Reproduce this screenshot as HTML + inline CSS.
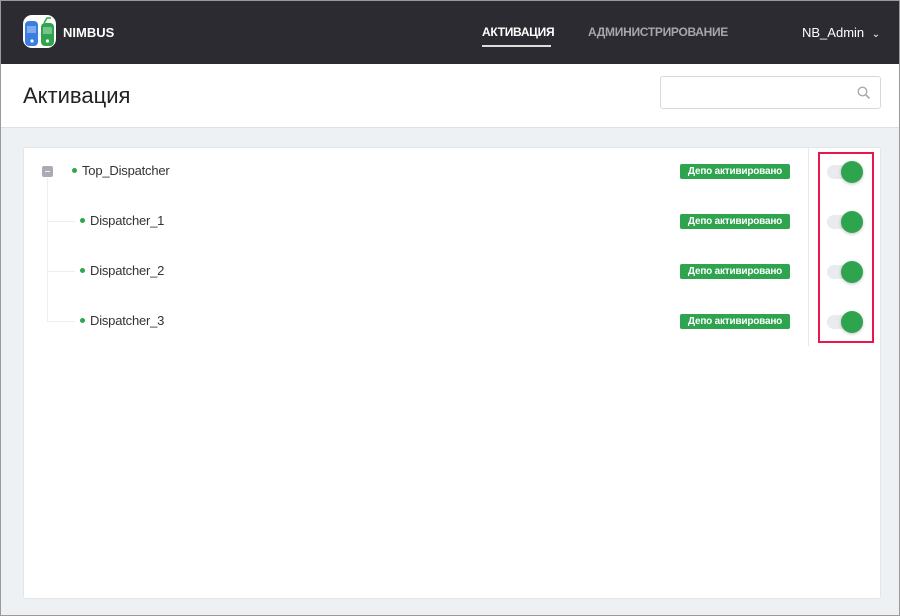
<!DOCTYPE html>
<html><head><meta charset="utf-8"><style>
*{margin:0;padding:0;box-sizing:border-box}
body{width:900px;height:616px;overflow:hidden;font-family:"Liberation Sans",sans-serif;background:#eef1f3;position:relative}
.frame{position:absolute;inset:0;border:1px solid #9a9a9a;pointer-events:none;z-index:9}
.hdr{position:absolute;left:0;top:0;width:900px;height:64px;background:#2c2b31}
.logo{position:absolute;left:23px;top:15px;width:33px;height:33px;background:#fff;border-radius:9px;overflow:hidden}
.brand{position:absolute;left:63px;top:25px;color:#fff;font-weight:bold;font-size:13px}
.nav{position:absolute;top:25px;font-size:12px;font-weight:bold;letter-spacing:-0.3px}
.user{position:absolute;left:802px;top:25px;color:#fff;font-size:13px}
.tbar{position:absolute;left:0;top:64px;width:900px;height:64px;background:#fff;border-bottom:1px solid #dde1e4}
.title{position:absolute;left:23px;top:83px;font-size:22px;color:#222}
.search{position:absolute;left:660px;top:76px;width:221px;height:33px;border:1px solid #d6d9dc;border-radius:3px;background:#fff}
.card{position:absolute;left:23px;top:147px;width:858px;height:452px;background:#fff;border:1px solid #e3e6e8;border-radius:3px}
.sep{position:absolute;left:808px;top:148px;width:1px;height:198px;background:#e6e8ea}
.row{position:absolute;font-size:13px;color:#333;letter-spacing:-0.2px}
.dot{display:inline-block;width:5px;height:5px;border-radius:50%;background:#2ea44f;margin-right:5px;vertical-align:middle;position:relative;top:-1px}
.badge{position:absolute;left:680px;width:110px;height:15px;background:#2ea44f;border-radius:2px;color:#fff;font-size:10px;font-weight:bold;text-align:center;line-height:15px;letter-spacing:-0.2px}
.track{position:absolute;left:827px;width:34px;height:14px;border-radius:7px;background:#e9ebee}
.knob{position:absolute;left:841px;width:22px;height:22px;border-radius:50%;background:#2ea44f;box-shadow:0 1px 3px rgba(0,0,0,.25)}
.redbox{position:absolute;left:818px;top:152px;width:56px;height:191px;border:2px solid #e8184a}
.tl{position:absolute;background:#eceef0}
</style></head><body>
<div class="hdr">
 <div class="logo"><svg width="33" height="33" viewBox="0 0 33 33">
  <rect x="2" y="6" width="13" height="25" rx="4" fill="#3b7de0"/><rect x="4" y="11" width="9" height="7" fill="#fff" opacity=".35"/><circle cx="9" cy="26" r="1.6" fill="#fff"/>
  <rect x="18" y="8" width="13" height="23" rx="4" fill="#2ea44f"/><path d="M21 8 L24 3 L28 3" stroke="#2ea44f" stroke-width="1.5" fill="none"/><rect x="20" y="12" width="9" height="7" fill="#fff" opacity=".35"/><circle cx="24.5" cy="26" r="1.6" fill="#fff"/>
 </svg></div>
 <div class="brand">NIMBUS</div>
 <div class="nav" style="left:482px;color:#fff">АКТИВАЦИЯ</div>
 <div style="position:absolute;left:482px;top:45px;width:69px;height:2px;background:#ddd"></div>
 <div class="nav" style="left:588px;color:#a6a6ab">АДМИНИСТРИРОВАНИЕ</div>
 <div class="user">NB_Admin <span style="font-size:10px;margin-left:4px">&#8964;</span></div>
</div>
<div class="tbar"></div>
<div class="title">Активация</div>
<div class="search"><svg style="position:absolute;right:9px;top:9px" width="14" height="14" viewBox="0 0 14 14"><circle cx="5.5" cy="5.5" r="4.3" stroke="#aaa" stroke-width="1.4" fill="none"/><path d="M8.7 8.7L12.5 12.5" stroke="#aaa" stroke-width="1.6"/></svg></div>
<div class="card"></div>
<div class="sep"></div>
<div style="position:absolute;left:42px;top:166px;width:11px;height:11px;background:#a9adb3;border-radius:2px"><div style="position:absolute;left:3px;top:5px;width:5px;height:1px;background:#eee"></div></div>
<div class="tl" style="left:47px;top:178px;width:1px;height:144px"></div>
<div class="tl" style="left:47px;top:221px;width:28px;height:1px"></div>
<div class="tl" style="left:47px;top:271px;width:28px;height:1px"></div>
<div class="tl" style="left:47px;top:321px;width:28px;height:1px"></div>
<div class="row" style="left:72px;top:163px"><span class="dot"></span>Top_Dispatcher</div>
<div class="row" style="left:80px;top:213px"><span class="dot"></span>Dispatcher_1</div>
<div class="row" style="left:80px;top:263px"><span class="dot"></span>Dispatcher_2</div>
<div class="row" style="left:80px;top:313px"><span class="dot"></span>Dispatcher_3</div>
<div class="badge" style="top:164px">Депо активировано</div>
<div class="badge" style="top:214px">Депо активировано</div>
<div class="badge" style="top:264px">Депо активировано</div>
<div class="badge" style="top:314px">Депо активировано</div>
<div class="track" style="top:165px"></div><div class="knob" style="top:161px"></div>
<div class="track" style="top:215px"></div><div class="knob" style="top:211px"></div>
<div class="track" style="top:265px"></div><div class="knob" style="top:261px"></div>
<div class="track" style="top:315px"></div><div class="knob" style="top:311px"></div>
<div class="redbox"></div>
<div class="frame"></div>
</body></html>
